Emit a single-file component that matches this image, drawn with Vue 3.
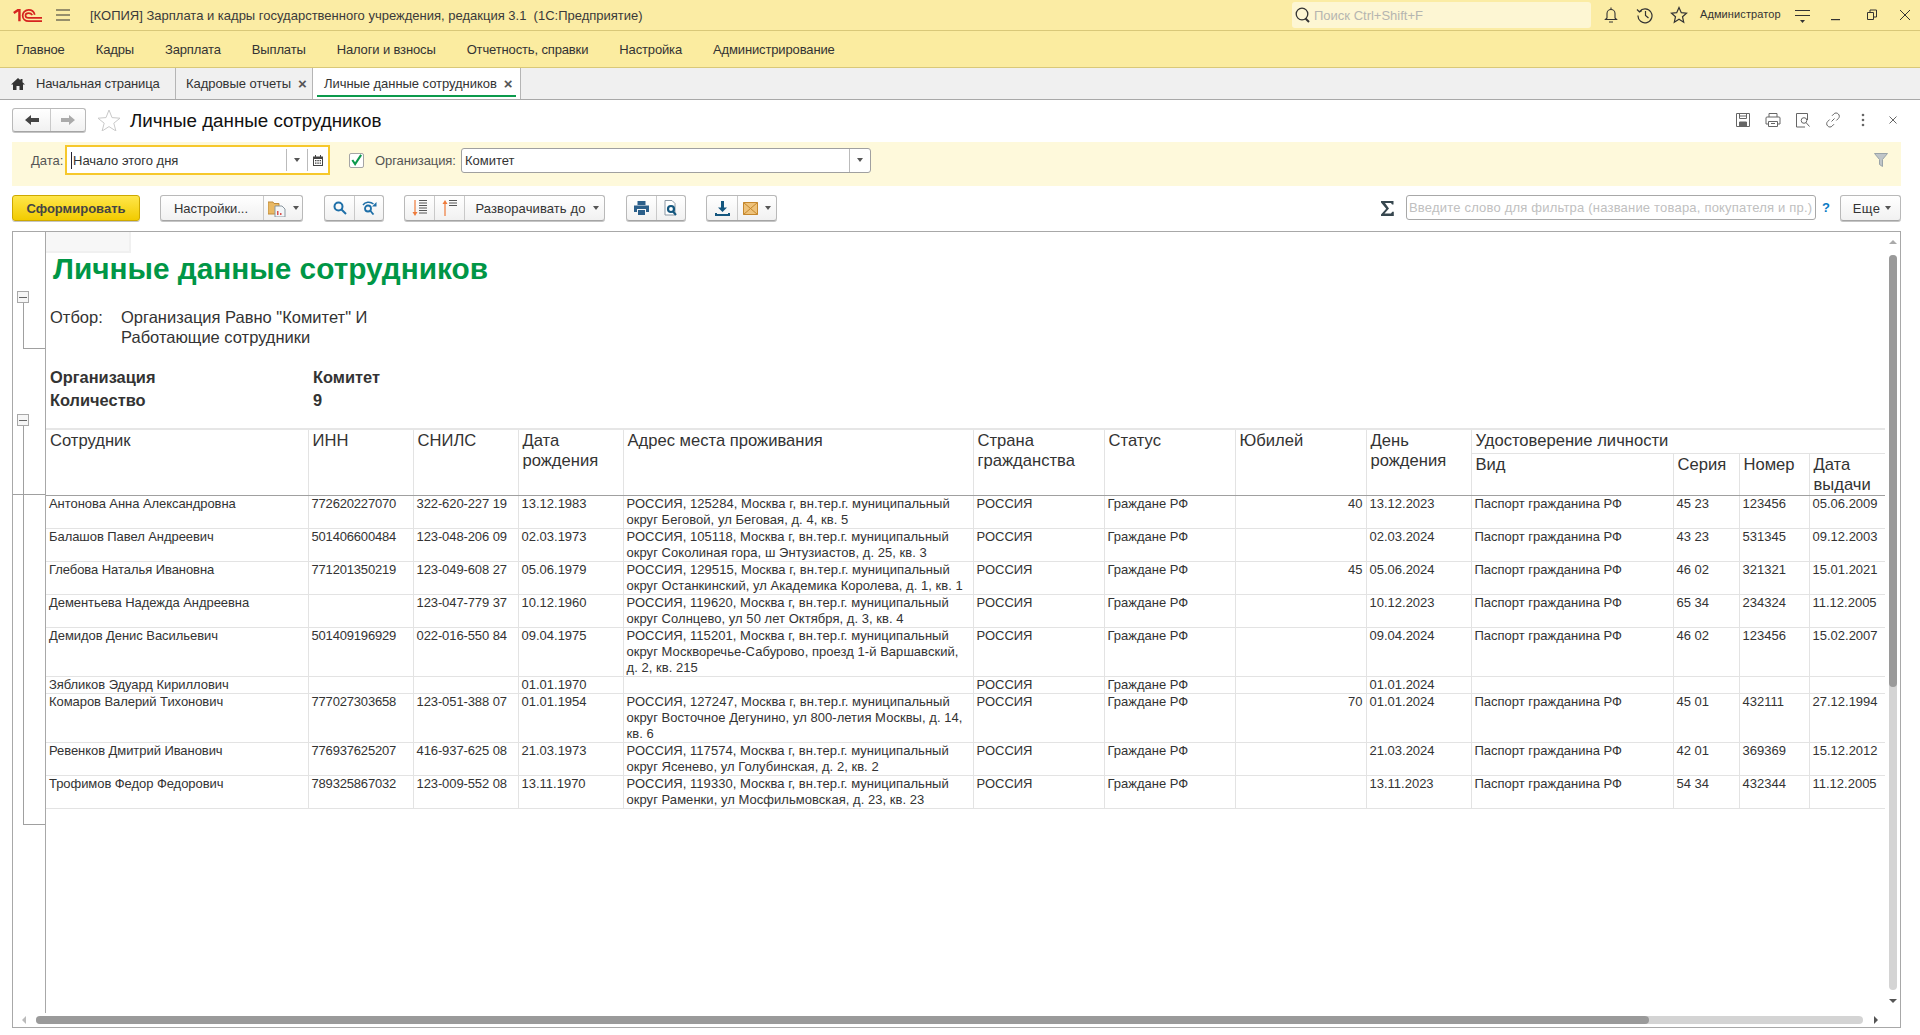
<script setup>
const cols = [263, 105, 105, 105, 350, 131, 131, 131, 105, 202, 66, 70, 76]
const rows = [
  { h: 32, c: ['Антонова Анна Александровна', '772620227070', '322-620-227 19', '13.12.1983', 'РОССИЯ, 125284, Москва г, вн.тер.г. муниципальный округ Беговой, ул Беговая, д. 4, кв. 5', 'РОССИЯ', 'Граждане РФ', '40', '13.12.2023', 'Паспорт гражданина РФ', '45 23', '123456', '05.06.2009'] },
  { h: 33, c: ['Балашов Павел Андреевич', '501406600484', '123-048-206 09', '02.03.1973', 'РОССИЯ, 105118, Москва г, вн.тер.г. муниципальный округ Соколиная гора, ш Энтузиастов, д. 25, кв. 3', 'РОССИЯ', 'Граждане РФ', '', '02.03.2024', 'Паспорт гражданина РФ', '43 23', '531345', '09.12.2003'] },
  { h: 33, c: ['Глебова Наталья Ивановна', '771201350219', '123-049-608 27', '05.06.1979', 'РОССИЯ, 129515, Москва г, вн.тер.г. муниципальный округ Останкинский, ул Академика Королева, д. 1, кв. 1', 'РОССИЯ', 'Граждане РФ', '45', '05.06.2024', 'Паспорт гражданина РФ', '46 02', '321321', '15.01.2021'] },
  { h: 33, c: ['Дементьева Надежда Андреевна', '', '123-047-779 37', '10.12.1960', 'РОССИЯ, 119620, Москва г, вн.тер.г. муниципальный округ Солнцево, ул 50 лет Октября, д. 3, кв. 4', 'РОССИЯ', 'Граждане РФ', '', '10.12.2023', 'Паспорт гражданина РФ', '65 34', '234324', '11.12.2005'] },
  { h: 49, c: ['Демидов Денис Васильевич', '501409196929', '022-016-550 84', '09.04.1975', 'РОССИЯ, 115201, Москва г, вн.тер.г. муниципальный округ Москворечье-Сабурово, проезд 1-й Варшавский, д. 2, кв. 215', 'РОССИЯ', 'Граждане РФ', '', '09.04.2024', 'Паспорт гражданина РФ', '46 02', '123456', '15.02.2007'] },
  { h: 17, c: ['Зябликов Эдуард Кириллович', '', '', '01.01.1970', '', 'РОССИЯ', 'Граждане РФ', '', '01.01.2024', '', '', '', ''] },
  { h: 49, c: ['Комаров Валерий Тихонович', '777027303658', '123-051-388 07', '01.01.1954', 'РОССИЯ, 127247, Москва г, вн.тер.г. муниципальный округ Восточное Дегунино, ул 800-летия Москвы, д. 14, кв. 6', 'РОССИЯ', 'Граждане РФ', '70', '01.01.2024', 'Паспорт гражданина РФ', '45 01', '432111', '27.12.1994'] },
  { h: 33, c: ['Ревенков Дмитрий Иванович', '776937625207', '416-937-625 08', '21.03.1973', 'РОССИЯ, 117574, Москва г, вн.тер.г. муниципальный округ Ясенево, ул Голубинская, д. 2, кв. 2', 'РОССИЯ', 'Граждане РФ', '', '21.03.2024', 'Паспорт гражданина РФ', '42 01', '369369', '15.12.2012'] },
  { h: 33, c: ['Трофимов Федор Федорович', '789325867032', '123-009-552 08', '13.11.1970', 'РОССИЯ, 119330, Москва г, вн.тер.г. муниципальный округ Раменки, ул Мосфильмовская, д. 23, кв. 23', 'РОССИЯ', 'Граждане РФ', '', '13.11.2023', 'Паспорт гражданина РФ', '54 34', '432344', '11.12.2005'] },
]
const menu = ['Главное', 'Кадры', 'Зарплата', 'Выплаты', 'Налоги и взносы', 'Отчетность, справки', 'Настройка', 'Администрирование']
</script>

<template>
  <div class="app">
    <header class="titlebar">
      <svg class="logo" width="29" height="15" viewBox="0 0 36 18" fill="none" stroke="#d6231f">
        <path d="M1 6 L6 2.500 H8 V16" stroke-width="3" />
        <path d="M27 8 C26 4.500 23 2 19.500 2 C15 2 12 5.500 12 9 C12 13 15 16 19.500 16 H36" stroke-width="2.200" />
        <path d="M24 8.500 C23 6.800 21.500 6 19.500 6 C17 6 15.500 7.300 15.500 9 C15.500 10.800 17 12 19.500 12 H36" stroke-width="2" />
      </svg>
      <svg class="burger" width="14" height="12" viewBox="0 0 14 12" stroke="#333" stroke-width="1"><path d="M0 1h14M0 6h14M0 11h14" /></svg>
      <div class="apptitle">[КОПИЯ] Зарплата и кадры государственного учреждения, редакция 3.1 &nbsp;(1С:Предприятие)</div>
      <div class="gsearch">
        <svg width="16" height="18" viewBox="0 0 16 18" fill="none" stroke="#333" stroke-width="1.300"><circle cx="7" cy="8" r="5.800" /><path d="M10.500 12.500l3.500 3.500" stroke-width="2" /></svg>
        <span>Поиск Ctrl+Shift+F</span>
      </div>
      <div class="sysicons">
        <svg class="s1" width="16" height="18" viewBox="0 0 16 18" fill="none" stroke="#333" stroke-width="1.100"><path d="M8 1.500v1.500M4 12V7.500C4 5 6 3.500 8 3.500S12 5 12 7.500V12l1.500 1.500h-11zM6 16h4" /></svg>
        <svg class="s2" width="18" height="18" viewBox="0 0 18 18" fill="none" stroke="#333" stroke-width="1.200"><path d="M3.500 5.500A7 7 0 1 1 2 9.500M1 3.500l2.500 2.500 2.500-1.500M9.500 5v4.500l3 2.500" /></svg>
        <svg class="s3" width="18" height="18" viewBox="0 0 18 18" fill="none" stroke="#333" stroke-width="1.200"><path d="M9 1.500l2.300 5.200 5.200.5-4 3.500 1.200 5.500L9 13.300l-4.700 2.900 1.200-5.500-4-3.500 5.200-.5z" /></svg>
        <span class="user">Администратор</span>
        <svg class="s4" width="16" height="14" viewBox="0 0 16 14" fill="#333"><path d="M0 1h15v1H0zM0 6h15v1H0z" /><path d="M5 11h5l-2.500 3z" /></svg>
        <svg class="s5" width="10" height="12" viewBox="0 0 10 12" fill="#333"><path d="M0 10h9v1.200H0z" /></svg>
        <svg class="s6" width="10" height="12" viewBox="0 0 10 12" fill="none" stroke="#333" stroke-width="1"><path d="M.5 3.500h6v7h-6zM3 3.500V1h6.500v7H6.500" /></svg>
        <svg class="s7" width="12" height="12" viewBox="0 0 12 12" fill="none" stroke="#333" stroke-width="1"><path d="M1 1l10 10M11 1L1 11" /></svg>
      </div>
    </header>

    <nav class="menu">
      <span v-for="m in menu" :key="m">{{ m }}</span>
    </nav>

    <div class="tabs">
      <div class="tab tab1">
        <svg width="14" height="12" viewBox="0 0 14 12" fill="#333"><path d="M7 0L0 6.500h2V12h3.500V8h3v4H12V6.500h2L11.500 4.200V1h-2v1.300z" /></svg>
        <span>Начальная страница</span>
      </div>
      <div class="tab tab2"><span>Кадровые отчеты</span><b class="x">×</b></div>
      <div class="tab tab3"><span>Личные данные сотрудников</span><b class="x">×</b></div>
    </div>

    <div class="cmd">
      <div class="btn nav">
        <div class="cell c1"><svg width="14" height="10" viewBox="0 0 14 10" fill="#444"><path d="M0 5l6-5v3h8v4H6v3z" /></svg></div>
        <div class="cell c2"><svg width="14" height="10" viewBox="0 0 14 10" fill="#aaa"><path d="M14 5L8 0v3H0v4h8v3z" /></svg></div>
      </div>
      <svg class="bigstar" width="24" height="22" viewBox="0 0 24 22" fill="#fff" stroke="#c9c9c9" stroke-width="1"><path d="M12 1l3 7.600 8 .6-6.200 5 2.100 7.800L12 17.600 5.100 22 7.200 14.200 1 9.200l8-.6z" /></svg>
      <h1 class="formtitle">Личные данные сотрудников</h1>
      <div class="cmdicons">
        <svg width="16" height="16" viewBox="0 0 16 16" fill="none" stroke="#666"><path d="M1.500 1.500h13v13h-13zM4.500 1.500v5h7v-5M4.500 4h7" /><path d="M4.500 10h7v4.500h-7z" fill="#666" /></svg>
        <svg width="16" height="16" viewBox="0 0 16 16" fill="none" stroke="#666"><path d="M4 5V1.500h8V5M3.500 12H1V6a1 1 0 0 1 1-1h12a1 1 0 0 1 1 1v6h-2.500M3.500 9.500h9v5h-9zM6 11.500h4" /></svg>
        <svg width="16" height="16" viewBox="0 0 16 16" fill="none" stroke="#666"><path d="M10 15H1.500V1.500h11V8" /><circle cx="9" cy="8.500" r="2.800" /><path d="M11 10.500l3.500 4" /></svg>
        <svg width="16" height="16" viewBox="0 0 16 16" fill="none" stroke="#666"><path d="M6.500 9.500l3-3M7 3.800l1.800-1.800a3 3 0 0 1 4.500 0 3 3 0 0 1 0 4.500l-2 2M9 12.200L7.200 14a3 3 0 0 1-4.500 0 3 3 0 0 1 0-4.500l2-2" /></svg>
        <svg width="16" height="16" viewBox="0 0 16 16" fill="#666"><circle cx="8" cy="3" r="1.300" /><circle cx="8" cy="8" r="1.300" /><circle cx="8" cy="13" r="1.300" /></svg>
        <svg width="16" height="16" viewBox="0 0 16 16" fill="none" stroke="#666"><path d="M4.500 4.500l7 7M11.500 4.500l-7 7" /></svg>
      </div>
    </div>

    <div class="filters">
      <label class="lbl lbl-date">Дата:</label>
      <div class="datefield">
        <span class="caret"></span><span class="val">Начало этого дня</span>
        <span class="d1"><i class="arrow"></i></span>
        <span class="d2"><svg width="10" height="11" viewBox="0 0 10 11" fill="#444"><path d="M0 1.500h2V0h1v1.500h4V0h1v1.500h2V11H0zM1 4v6h8V4z" /><path d="M2 5h1.500v1.300H2zM4.300 5h1.500v1.300H4.300zM6.600 5H8v1.300H6.600zM2 7.500h1.500v1.300H2zM4.300 7.500h1.500v1.300H4.300zM6.600 7.500H8v1.300H6.600z" /></svg></span>
      </div>
      <div class="check"><svg width="14" height="14" viewBox="0 0 14 14" fill="none" stroke="#0d9a4c" stroke-width="2.200"><path d="M2.500 7l3 4.500L12 1.500" /></svg></div>
      <label class="lbl lbl-org">Организация:</label>
      <div class="orgfield"><span>Комитет</span><span class="d3"><i class="arrow"></i></span></div>
      <svg class="funnel" width="14" height="14" viewBox="0 0 14 14" fill="#bfc5c8" stroke="#9aa4a8"><path d="M.5 .5h13L8.500 6.500v7l-3-2V6.500z" /></svg>
    </div>

    <div class="toolbar">
      <button class="btn primary">Сформировать</button>
      <div class="btn grp g1">
        <div class="cell w102">Настройки...</div>
        <div class="cell w41 ic">
          <svg width="18" height="17" viewBox="0 0 18 17"><path d="M0 2h5l1 1.500h5V14H0z" fill="#e9b964" stroke="#c08b3a" /><path d="M7 6h7l3 3v8H7z" fill="#f3f6f8" stroke="#8b97a0" /><path d="M9 11h1.500v4H9zM12 13h1.500v2H12z" fill="#d9534f" /></svg>
          <i class="arrow"></i>
        </div>
      </div>
      <div class="btn grp g2">
        <div class="cell w30"><svg width="14" height="14" viewBox="0 0 14 14" fill="none" stroke="#1e6fa8" stroke-width="2"><circle cx="5.500" cy="5.500" r="4" /><path d="M8.500 8.500l4.500 4.500" /></svg></div>
        <div class="cell w30"><svg width="15" height="14" viewBox="0 0 15 14" fill="none" stroke="#1e6fa8" stroke-width="1.800"><circle cx="6" cy="7.500" r="3" /><path d="M8.500 10l3 3.500" /><path d="M1 4C3 1 8 0 11.500 3" stroke-width="1.400" /><path d="M14.500 1v4.500H10z" fill="#1e6fa8" stroke="none" /></svg></div>
      </div>
      <div class="btn grp g3">
        <div class="cell w30"><svg width="16" height="18" viewBox="0 0 16 18" fill="none"><path d="M3 1v14" stroke="#ee7a3a" stroke-width="1.200" /><path d="M.5 13H5.500L3 17z" fill="#ee7a3a" /><path d="M7 1.500h8M7 4h8M7 6.500h8M7 9h8M7 11.500h8M7 14h8" stroke="#555" stroke-width="1" /></svg></div>
        <div class="cell w30"><svg width="16" height="18" viewBox="0 0 16 18" fill="none"><path d="M3 3v14" stroke="#ee7a3a" stroke-width="1.200" /><path d="M.5 5H5.500L3 1z" fill="#ee7a3a" /><path d="M7 1.500h8M7 4h8M7 6.500h8" stroke="#555" stroke-width="1" /></svg></div>
        <div class="cell w140">Разворачивать до<i class="arrow am"></i></div>
      </div>
      <div class="btn grp g4">
        <div class="cell w30"><svg width="15" height="14" viewBox="0 0 15 14" fill="#2b5f8a"><path d="M3.500 0h8v4h-8zM0 4.500h15V11h-3V8H3v3H0zM4 9h7v5H4z" /></svg></div>
        <div class="cell w30"><svg width="14" height="17" viewBox="0 0 14 17" fill="none"><path d="M1 .5h7l3 3V15H1z" fill="#fff" stroke="#8a97a3" /><circle cx="7" cy="9" r="3" stroke="#14577f" stroke-width="2.200" /><path d="M9 11.500l3 3.500" stroke="#14577f" stroke-width="2" /></svg></div>
      </div>
      <div class="btn grp g5">
        <div class="cell w30"><svg width="15" height="15" viewBox="0 0 15 15" fill="#14577f"><path d="M6 0h3v6.500h3L7.500 11 3 6.500h3zM0 12h2v1h11v-1h2v3H0z" /></svg></div>
        <div class="cell w41 ic"><svg width="15" height="13" viewBox="0 0 15 13"><path d="M.5.500h14v12H.5z" fill="#eec27a" stroke="#c5872c" /><path d="M.5.500l14 12M14.500.500l-14 12" stroke="#c5872c" fill="none" /></svg><i class="arrow"></i></div>
      </div>
      <svg class="sigma" width="13" height="15" viewBox="0 0 13 15" fill="#37474f"><path d="M0 0h12.500v3.500h-1.500L10 2H4l4 5.500L3.500 12.500H10l1.200-1.800h1.600V15H0v-1.500L5.200 7.700 0 1.500z" /></svg>
      <div class="textfilter">Введите слово для фильтра (название товара, покупателя и пр.)</div>
      <span class="help">?</span>
      <div class="btn more">Еще<i class="arrow am"></i></div>
    </div>

    <section class="report">
      <div class="gutter">
        <i class="box b1"></i><i class="vline v1"></i><i class="hline h1"></i>
        <i class="box b2"></i><i class="vline v2"></i><i class="hline h2"></i>
        <i class="hline h3"></i>
      </div>
      <div class="sheet">
        <div class="selcell"></div>
        <div class="rtitle">Личные данные сотрудников</div>
        <div class="otbor">
          <span class="ol">Отбор:</span>
          <span class="ov">Организация Равно "Комитет" И<br />Работающие сотрудники</span>
        </div>
        <div class="summary s-a"><b>Организация</b><b>Комитет</b></div>
        <div class="summary"><b>Количество</b><b>9</b></div>
        <table class="data">
          <colgroup><col v-for="(c, i) in cols" :key="i" :style="{ width: c + 'px' }" /></colgroup>
          <thead>
            <tr class="h-top">
              <th rowspan="2">Сотрудник</th><th rowspan="2">ИНН</th><th rowspan="2">СНИЛС</th><th rowspan="2">Дата рождения</th>
              <th rowspan="2">Адрес места проживания</th><th rowspan="2">Страна гражданства</th><th rowspan="2">Статус</th><th rowspan="2">Юбилей</th>
              <th rowspan="2">День рождения</th><th colspan="4">Удостоверение личности</th>
            </tr>
            <tr class="h-sub"><th>Вид</th><th>Серия</th><th>Номер</th><th>Дата выдачи</th></tr>
          </thead>
          <tbody>
            <tr v-for="(r, ri) in rows" :key="ri" :style="{ height: r.h + 'px' }">
              <td v-for="(v, ci) in r.c" :key="ci" :class="['col' + ci, { num: ci === 7 }]">{{ v }}</td>
            </tr>
          </tbody>
        </table>
      </div>
      <div class="vscroll"><i class="vthumb"></i></div>
      <i class="tri up"></i><i class="tri down"></i>
      <div class="hscroll"><i class="hthumb"></i></div>
      <i class="tri left"></i><i class="tri right"></i>
    </section>
  </div>
</template>

<style>
html, body { margin: 0; background: #fff; }
</style>

<style scoped>
.app { width: 1920px; height: 1035px; overflow: hidden; position: relative; font: 13px "Liberation Sans", Arial, sans-serif; color: #333; background: #fff; }
.titlebar { height: 30px; background: #fbeca4; border-bottom: 1px solid #d9c878; display: flex; align-items: center; position: relative; }
.logo { margin-left: 13px; flex: none; }
.burger { margin-left: 14px; flex: none; }
.apptitle { margin-left: 20px; font-size: 13px; white-space: nowrap; flex: 1; color: #3a3a3a; }
.gsearch { width: 299px; height: 26px; background: #fdf6d3; border-radius: 3px; display: flex; align-items: center; gap: 3px; padding-left: 3px; box-sizing: border-box; color: #b5b5b0; flex: none; }
.sysicons { width: 329px; position: relative; height: 30px; flex: none; }
.sysicons svg { position: absolute; top: 6px; }
.s1 { left: 12px; } .s2 { left: 45px; } .s3 { left: 79px; } .s4 { left: 204px; top: 9px !important; } .s5 { left: 240px; top: 9px !important; } .s6 { left: 276px; top: 9px !important; } .s7 { left: 308px; top: 9px !important; }
.user { position: absolute; left: 109px; top: 8px; font-size: 11px; letter-spacing: .1px; color: #333; }
.menu { height: 36px; background: #fbeca0; border-bottom: 1px solid #d9c878; display: flex; align-items: center; padding-left: 16px; gap: 31px; font-size: 13px; letter-spacing: -.14px; color: #333; }
.tabs { height: 31px; background: #f0f0f0; border-bottom: 1px solid #a8a8a8; display: flex; }
.tab { display: flex; align-items: center; box-sizing: border-box; height: 31px; border-right: 1px solid #b5b5b5; position: relative; color: #333; letter-spacing: -.05px; }
.tab1 { width: 176px; padding-left: 11px; gap: 11px; letter-spacing: -.12px; }
.tab2 { width: 137px; padding-left: 10px; }
.tab3 { width: 208px; padding-left: 11px; background: #fff; }
.tab3::after { content: ""; position: absolute; left: 4px; right: 4px; bottom: 2px; height: 2px; background: #0b9a4c; }
.x { margin-left: 7px; font-size: 15px; line-height: 1; color: #555; font-weight: 700; }
.cmd { height: 42px; display: flex; align-items: center; padding: 0 19px 2px 12px; box-sizing: border-box; }
.btn { border: 1px solid #b9b9b9; border-bottom-color: #a5a5a5; border-radius: 3px; background: linear-gradient(#fff, #f1f1f1); box-shadow: 0 1px 0 #c5c5c5; box-sizing: border-box; font: inherit; color: #333; }
.nav { width: 74px; height: 24px; display: flex; flex: none; }
.cell { height: 100%; display: flex; align-items: center; justify-content: center; box-sizing: border-box; flex: none; }
.cell + .cell { border-left: 1px solid #c9c9c9; }
.c1 { width: 37px; } .c2 { flex: 1; }
.bigstar { margin-left: 11px; flex: none; }
.formtitle { margin: 1px 0 0 9px; font-size: 18.8px; font-weight: 400; color: #111; white-space: nowrap; }
.cmdicons { margin-left: auto; display: flex; gap: 14px; }
.filters { margin: 0 19px 0 12px; height: 44px; padding-bottom: 8px; background: #fef9db; position: relative; display: flex; align-items: center; box-sizing: border-box; }
.lbl { color: #555; white-space: nowrap; }
.lbl-date { margin-left: 19px; width: 34px; }
.datefield { width: 265px; height: 30px; border: 2px solid #f6c82b; box-sizing: border-box; background: #fff; display: flex; align-items: center; flex: none; }
.caret { width: 1px; height: 17px; background: #223; margin-left: 4px; }
.val { flex: 1; padding-left: 1px; color: #333; }
.d1, .d2, .d3 { display: flex; align-items: center; justify-content: center; height: 22px; border-left: 1px solid #bbb; box-sizing: border-box; flex: none; }
.d1 { width: 21px; } .d2 { width: 21px; }
.check { width: 15px; height: 15px; margin-left: 19px; border: 1px solid #a5a5a5; border-radius: 2px; background: #fff; flex: none; display: flex; align-items: center; justify-content: center; box-sizing: border-box; overflow: visible; }
.lbl-org { margin-left: 11px; width: 86px; letter-spacing: -.1px; }
.orgfield { width: 410px; height: 25px; box-sizing: border-box; border: 1px solid #a0a0a0; border-radius: 3px; background: #fff; display: flex; align-items: center; padding-left: 3px; flex: none; }
.orgfield span:first-child { flex: 1; }
.d3 { width: 21px; height: 23px; }
.funnel { position: absolute; right: 13px; top: 11px; }
.arrow { display: inline-block; width: 0; height: 0; border: 3px solid transparent; border-top: 4px solid #555; border-bottom: 0; }
.am { margin-left: 8px; }
.toolbar { height: 45px; padding: 9px 19px 0 12px; box-sizing: border-box; display: flex; align-items: flex-start; }
.toolbar .btn { height: 26px; flex: none; }
.primary { width: 128px; background: linear-gradient(#ffe64a, #f2cb00); border-color: #cda800; font-weight: 700; font-size: 13px; color: #444; padding: 0; }
.grp { display: flex; }
.g1 { width: 143px; margin-left: 20px; } .g2 { width: 60px; margin-left: 21px; } .g3 { width: 201px; margin-left: 20px; } .g4 { width: 60px; margin-left: 21px; } .g5 { width: 71px; margin-left: 20px; }
.w102 { width: 102px; padding-right: 2px; letter-spacing: -.05px; } .w30 { width: 30px; } .w41 { flex: 1; } .w140 { flex: 1; padding-left: 6px; letter-spacing: .1px; }
.g2 .cell:first-child, .g3 .cell:first-child, .g4 .cell:first-child { width: 29px; }
.g2 .cell:last-child, .g4 .cell:last-child { flex: 1; }
.ic { gap: 7px; }
.sigma { margin-left: 604px; margin-top: 6px; flex: none; }
.textfilter { width: 410px; height: 25px; margin-left: 12px; border: 1px solid #a8a8a8; border-radius: 3px; box-sizing: border-box; color: #c0c0c0; padding-left: 2px; line-height: 23px; white-space: nowrap; overflow: hidden; flex: none; letter-spacing: .2px; }
.help { margin-left: 6px; width: 17px; color: #0a7ac4; font-weight: 700; line-height: 25px; }
.more { width: 61px; margin-left: 1px; display: flex; align-items: center; justify-content: center; padding-left: 3px; letter-spacing: .4px; }
.more .am { margin-left: 5px; }
.report { position: relative; margin-left: 12px; width: 1889px; height: 797px; box-sizing: border-box; border: 1px solid #a8a8a8; display: flex; overflow: hidden; }
.gutter { width: 32px; height: 781px; flex: none; position: relative; border-right: 1px solid #a8a8a8; }
.gutter i { position: absolute; display: block; }
.box { left: 4px; width: 12px; height: 12px; box-sizing: border-box; border: 1px solid #a8a8a8; background: linear-gradient(#666, #666) center / 8px 1px no-repeat #f6f6f6; }
.b1 { top: 59px; } .b2 { top: 182px; }
.vline { left: 10px; width: 1px; background: #a0a0a0; }
.v1 { top: 71px; height: 46px; } .v2 { top: 194px; height: 399px; }
.hline { height: 1px; background: #a0a0a0; left: 10px; width: 22px; }
.h1 { top: 116px; } .h2 { top: 592px; }
.h3 { top: 262px; left: 0; width: 32px; }
.sheet { flex: 1; min-width: 0; color: #333; }
.selcell { width: 83px; height: 19px; background: #f7f7f7; border-right: 2px solid #f0f0f0; border-bottom: 2px solid #f0f0f0; }
.rtitle { margin: 0 0 0 7px; font-size: 29.8px; line-height: 32px; font-weight: 700; color: #009646; white-space: nowrap; }
.otbor { margin: 22px 0 0 4px; display: flex; font-size: 16.5px; line-height: 20px; color: #333; }
.ol { width: 71px; }
.summary { display: flex; font-size: 16.4px; line-height: 23px; margin-left: 4px; color: #333; }
.summary b:first-child { width: 263px; }
.s-a { margin-top: 19px; }
.data { margin: 16px 0 0 -1px; border-collapse: collapse; table-layout: fixed; width: 1840px; }
th { font-weight: 400; font-size: 16.6px; line-height: 20px; text-align: left; vertical-align: top; padding: 1px 4px 0 4px; border: 1px solid #e3e3e3; border-top: 2px solid #e6e6e6; border-bottom-color: #a0a0a0; overflow: hidden; }
.h-top th:first-child { border-left: 0; padding-left: 5px; }
td:first-child { border-left: 0; padding-left: 4px; }
.h-top { height: 24px; }
.h-top th[colspan] { border-bottom-color: #e3e3e3; border-right: 0; }
.h-sub { height: 42px; }
.h-sub th { border-top: 1px solid #e3e3e3; padding-top: 1px; }
.h-sub th:last-child { border-right: 0; }
td { font-size: 13px; line-height: 16px; vertical-align: top; padding: 0 3px; border: 1px solid #e3e3e3; border-top: 0; overflow: hidden; color: #333; }
td:last-child { border-right: 0; }
.col0 { letter-spacing: -.06px; }
.col1 { letter-spacing: -.18px; }
.col2 { letter-spacing: -.1px; }
.col4 { letter-spacing: .04px; }
.num { text-align: right; }
.vscroll { position: absolute; right: 3px; top: 23px; height: 735px; width: 8px; background: #d4d4d4; border-radius: 4px; }
.vthumb { display: block; width: 8px; height: 432px; background: #9a9a9a; border-radius: 4px; }
.hscroll { position: absolute; left: 23px; top: 784px; height: 8px; width: 1827px; background: #d4d4d4; border-radius: 4px; }
.hthumb { display: block; height: 8px; width: 1613px; background: #9a9a9a; border-radius: 4px; }
.tri { position: absolute; width: 0; height: 0; border: 4px solid transparent; }
.up { right: 3px; top: 8px; border-bottom: 4px solid #aaa; border-top: 0; }
.down { right: 3px; top: 767px; border-top: 4px solid #555; border-bottom: 0; }
.left { left: 9px; top: 784px; border-right: 4px solid #bbb; border-left: 0; }
.right { right: 22px; top: 784px; border-left: 4px solid #555; border-right: 0; }
</style>
